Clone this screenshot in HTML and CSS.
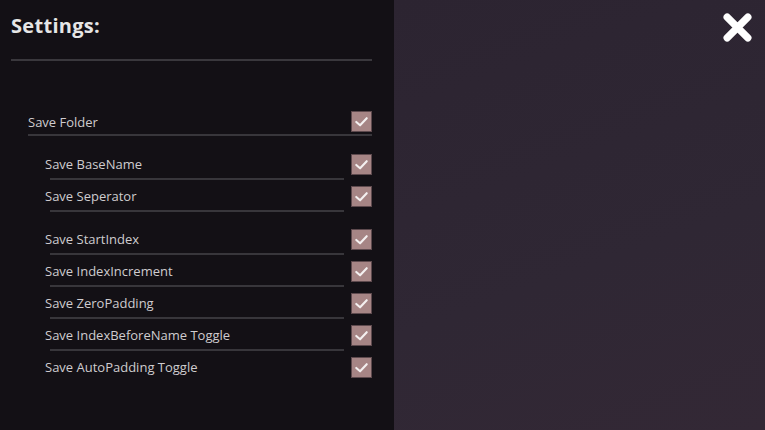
FILE: index.html
```html
<!DOCTYPE html>
<html>
<head>
<meta charset="utf-8">
<link rel="stylesheet" href="styles.css">
</head>
<body>
<div class="screen">
  <aside class="panel">
    <h1 class="title">Settings:</h1>
    <div class="rule"></div>
    <div class="list">
      <div class="row top">
        <span class="label">Save Folder</span>
        <span class="check"><svg viewBox="0 0 20 20"><path d="M4.5 10.5 L8.5 14 L15.5 6.5"/></svg></span>
      </div>
      <div class="sub">
        <div class="row">
          <span class="label">Save BaseName</span>
          <span class="check"><svg viewBox="0 0 20 20"><path d="M4.5 10.5 L8.5 14 L15.5 6.5"/></svg></span>
        </div>
        <div class="row">
          <span class="label">Save Seperator</span>
          <span class="check"><svg viewBox="0 0 20 20"><path d="M4.5 10.5 L8.5 14 L15.5 6.5"/></svg></span>
        </div>
        <div class="row gap">
          <span class="label">Save StartIndex</span>
          <span class="check"><svg viewBox="0 0 20 20"><path d="M4.5 10.5 L8.5 14 L15.5 6.5"/></svg></span>
        </div>
        <div class="row">
          <span class="label">Save IndexIncrement</span>
          <span class="check"><svg viewBox="0 0 20 20"><path d="M4.5 10.5 L8.5 14 L15.5 6.5"/></svg></span>
        </div>
        <div class="row">
          <span class="label">Save ZeroPadding</span>
          <span class="check"><svg viewBox="0 0 20 20"><path d="M4.5 10.5 L8.5 14 L15.5 6.5"/></svg></span>
        </div>
        <div class="row">
          <span class="label">Save IndexBeforeName Toggle</span>
          <span class="check"><svg viewBox="0 0 20 20"><path d="M4.5 10.5 L8.5 14 L15.5 6.5"/></svg></span>
        </div>
        <div class="row last">
          <span class="label">Save AutoPadding Toggle</span>
          <span class="check"><svg viewBox="0 0 20 20"><path d="M4.5 10.5 L8.5 14 L15.5 6.5"/></svg></span>
        </div>
      </div>
    </div>
  </aside>
  <main class="stage">
    <button class="close" aria-label="Close">
      <svg viewBox="0 0 28 28"><path d="M4 4 L24 24 M24 4 L4 24"/></svg>
    </button>
  </main>
</div>
</body>
</html>
```

FILE: styles.css
```css
* { box-sizing: border-box; }
html, body { margin: 0; padding: 0; }
body {
  width: 765px;
  height: 430px;
  overflow: hidden;
  font-family: "Open Sans", "Noto Sans", sans-serif;
  background: #2e2633;
}
.screen {
  display: flex;
  width: 765px;
  height: 430px;
}
.panel {
  width: 394px;
  flex: none;
  background: #131015;
  padding: 13px 22px 0 11px;
  display: flex;
  flex-direction: column;
}
.title {
  margin: 0;
  font-size: 20px;
  font-weight: 700;
  line-height: 26px;
  color: #e6e6e6;
  letter-spacing: 0.3px;
}
.rule {
  margin-top: 20px;
  height: 2px;
  background: #3a383d;
}
.list {
  margin-top: 48px;
  padding-left: 17px;
}
.row {
  display: flex;
  align-items: center;
  justify-content: space-between;
  height: 25px;
  position: relative;
}
.row .label {
  font-size: 13px;
  color: #cfcccf;
}
.row.top {
  border-bottom: 2px solid #38363b;
  height: 27px;
  margin-bottom: 12px;
}
.sub {
  margin-left: 17px;
}
.sub .row {
  height: 32px;
}
.sub .row::after {
  content: "";
  position: absolute;
  left: 5px;
  right: 28px;
  bottom: 0;
  height: 2px;
  background: #38363b;
}
.sub .row.last::after { display: none; }
.sub .row.gap { margin-top: 11px; }
.check {
  width: 21px;
  height: 21px;
  background: #a68585;
  border: 1px solid #5e4a4e;
  display: flex;
  align-items: center;
  justify-content: center;
}
.check svg {
  width: 19px;
  height: 19px;
  fill: none;
  stroke: #f4f0f0;
  stroke-width: 2.2;
  stroke-linecap: round;
  stroke-linejoin: round;
}
.stage {
  flex: 1;
  background: linear-gradient(160deg, #2c2431 0%, #2f2734 60%, #332835 100%);
  display: flex;
  justify-content: flex-end;
  align-items: flex-start;
  padding: 13px 13px 0 0;
}
.close {
  width: 29px;
  height: 29px;
  padding: 0;
  border: 0;
  background: transparent;
  cursor: pointer;
}
.close svg {
  width: 29px;
  height: 29px;
  fill: none;
  stroke: #ffffff;
  stroke-width: 7;
  stroke-linecap: round;
}
```
